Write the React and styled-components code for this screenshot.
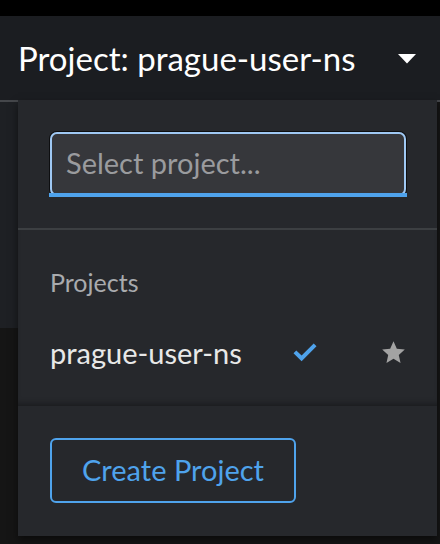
import React from "react";
import styled, { createGlobalStyle } from "styled-components";

const GlobalStyle = createGlobalStyle`
  html, body { margin: 0; padding: 0; background: #151515; }
  body { font-family: Lato, "Noto Sans", sans-serif; }
  * { box-sizing: border-box; }
`;

const Page = styled.div`
  position: relative;
  width: 440px;
  height: 544px;
  overflow: hidden;
  background: #151515;
  display: flex;
  flex-direction: column;
`;

const TopStrip = styled.div`
  height: 16px;
  background: #000;
`;

const Masthead = styled.header`
  height: 86px;
  background: #1b1d21;
  border-bottom: 2px solid #45474b;
  display: flex;
  align-items: center;
  padding: 0 24px 0 18px;
`;

const Toggle = styled.button`
  flex: 1;
  display: flex;
  align-items: center;
  justify-content: space-between;
  background: none;
  border: 0;
  padding: 0;
  color: #fff;
  font-family: inherit;
  font-size: 33px;
  line-height: 1;
  margin-top: 1px;
`;

const Caret = styled.svg`
  width: 18px;
  height: 10px;
  fill: #fff;
`;

const Content = styled.div`
  display: flex;
  flex-direction: column;
`;

const SideStrip = styled.div`
  width: 18px;
  height: 226px;
  background: #1e2024;
`;

const Menu = styled.div`
  position: absolute;
  top: 100px;
  left: 18px;
  width: 419px;
  height: 436px;
  background: #26282c;
  box-shadow: 0 4px 8px rgba(0, 0, 0, 0.5);
  display: flex;
  flex-direction: column;
`;

const SearchSection = styled.div`
  padding: 32px 31px 32px 32px;
  border-bottom: 2px solid #3c3f42;
`;

const InputWrap = styled.div`
  position: relative;
  border-radius: 7px;
  box-shadow: 0 0 0 1px #0d0e10;
  &::after {
    content: "";
    position: absolute;
    left: -1px;
    right: -1px;
    bottom: -1px;
    height: 4px;
    background: #4fa3ec;
  }
`;

const SearchInput = styled.input`
  display: block;
  width: 100%;
  height: 64px;
  background: #36373b;
  border: 2px solid #9fc8f3;
  border-radius: 7px;
  padding: 0 14px 4px;
  color: #e0e0e0;
  font-family: inherit;
  font-size: 29px;
  outline: none;
  &::placeholder {
    color: #9a9b9e;
  }
`;

const ListSection = styled.div`
  flex: 1;
  padding: 38px 32px 0;
  display: flex;
  flex-direction: column;
  box-shadow: inset 0 -6px 6px -4px rgba(0, 0, 0, 0.35);
`;

const GroupLabel = styled.div`
  color: #a9abae;
  font-size: 25px;
  line-height: 28px;
`;

const Item = styled.div`
  display: flex;
  align-items: center;
  margin-top: 40px;
  height: 32px;
`;

const ItemName = styled.span`
  color: #e8e8e8;
  font-size: 29px;
  width: 243px;
`;

const Check = styled.svg`
  width: 24px;
  height: 19px;
  fill: #4fa3ec;
`;

const Star = styled.svg`
  width: 23px;
  height: 22px;
  fill: #a3a3a3;
  margin-left: auto;
  margin-right: 0;
`;

const Footer = styled.div`
  height: 130px;
  padding: 32px;
`;

const CreateButton = styled.button`
  width: 246px;
  height: 65px;
  background: transparent;
  border: 2px solid #4fa3ec;
  border-radius: 6px;
  color: #4fa3ec;
  font-family: inherit;
  font-size: 29px;
  padding: 0 0 2px;
`;

export default function App() {
  return (
    <>
      <GlobalStyle />
      <Page>
        <TopStrip />
        <Masthead>
          <Toggle>
            <span>Project: prague-user-ns</span>
            <Caret viewBox="0 0 18 10">
              <path d="M0 0h18L9 9.5z" />
            </Caret>
          </Toggle>
        </Masthead>
        <Content>
          <SideStrip />
        </Content>
        <Menu>
          <SearchSection>
            <InputWrap>
              <SearchInput placeholder="Select project..." />
            </InputWrap>
          </SearchSection>
          <ListSection>
            <GroupLabel>Projects</GroupLabel>
            <Item>
              <ItemName>prague-user-ns</ItemName>
              <Check viewBox="0 0 24 19">
                <path d="M0.5 10.2 L3.3 7.4 L8.6 12.6 L20.7 0.5 L23.5 3.3 L8.6 18.2 Z" />
              </Check>
              <Star viewBox="0.9 0.9 22.2 21.2">
                <path d="M12 1.2l3.2 7.1 7.7.8-5.8 5.3 1.7 7.6L12 18.1l-6.8 3.9 1.7-7.6L1.1 9.1l7.7-.8z" />
              </Star>
            </Item>
          </ListSection>
          <Footer>
            <CreateButton>Create Project</CreateButton>
          </Footer>
        </Menu>
      </Page>
    </>
  );
}
